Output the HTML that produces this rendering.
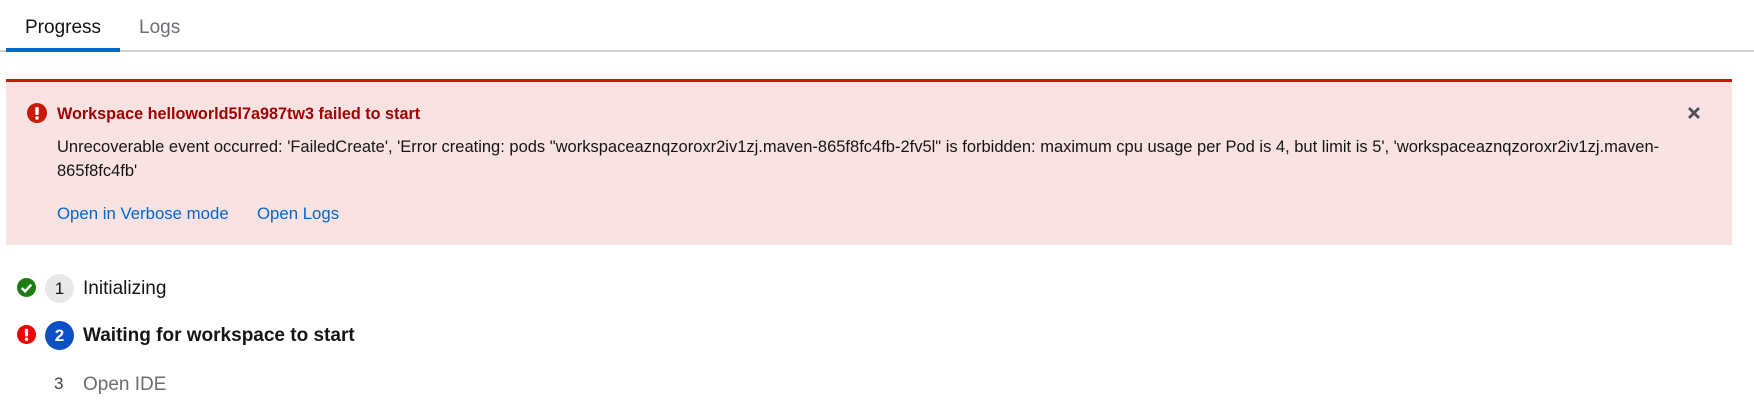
<!DOCTYPE html>
<html><head><style>
body{margin:0;width:1754px;height:402px;background:#fff;font-family:"Liberation Sans",sans-serif;color:#151515;position:relative;overflow:hidden}
.a{position:absolute;white-space:nowrap}
</style></head><body>
<div class="a" style="left:0;top:50px;width:1754px;height:2px;background:#d2d2d2"></div>
<div class="a" style="left:6px;top:48px;width:114px;height:4px;background:#0066cc"></div>
<div class="a" style="left:25px;top:17px;font-size:19px">Progress</div>
<div class="a" style="left:139px;top:17px;font-size:19px;color:#6a6e73">Logs</div>

<div class="a" style="left:6px;top:79px;width:1726px;height:166px;background:#f8e3e2;border-top:3px solid #c9190b;box-sizing:border-box"></div>
<svg class="a" style="left:27px;top:103px" width="20" height="20" viewBox="0 0 20 20"><circle cx="10" cy="10" r="10" fill="#c9190b"/><rect x="8.3" y="4" width="3.4" height="8" rx="1" fill="#fff"/><circle cx="10" cy="15" r="1.8" fill="#fff"/></svg>
<div class="a" style="left:57px;top:105px;font-size:16.2px;font-weight:bold;color:#a30000">Workspace helloworld5l7a987tw3 failed to start</div>
<svg class="a" style="left:1687px;top:106px" width="14" height="14" viewBox="0 0 14 14"><path d="M2 2L12 12M12 2L2 12" stroke="#4f5255" stroke-width="2.8"/></svg>
<div class="a" style="left:57px;top:135px;font-size:16.5px;line-height:24px;color:#151515">Unrecoverable event occurred: 'FailedCreate', 'Error creating: pods "workspaceaznqzoroxr2iv1zj.maven-865f8fc4fb-2fv5l" is forbidden: maximum cpu usage per Pod is 4, but limit is 5', 'workspaceaznqzoroxr2iv1zj.maven-<br>865f8fc4fb'</div>
<div class="a" style="left:57px;top:204px;font-size:16.8px;color:#0066cc">Open in Verbose mode</div>
<div class="a" style="left:257px;top:204px;font-size:16.8px;color:#0066cc">Open Logs</div>

<svg class="a" style="left:17px;top:278px" width="19" height="19" viewBox="0 0 20 20"><circle cx="10" cy="10" r="10" fill="#1e7c14"/><path d="M5 10.5L8.5 14L15 7" stroke="#fff" stroke-width="2.6" fill="none"/></svg>
<div class="a" style="left:45px;top:274px;width:29px;height:29px;border-radius:50%;background:#e8e8e8;text-align:center;line-height:29px;font-size:17px">1</div>
<div class="a" style="left:83px;top:278px;font-size:19px">Initializing</div>

<svg class="a" style="left:17px;top:325px" width="19" height="19" viewBox="0 0 20 20"><circle cx="10" cy="10" r="10" fill="#ee0000"/><rect x="8.3" y="4" width="3.4" height="8" rx="1" fill="#fff"/><circle cx="10" cy="15" r="1.8" fill="#fff"/></svg>
<div class="a" style="left:45px;top:321px;width:29px;height:29px;border-radius:50%;background:#0b50c4;color:#fff;text-align:center;line-height:29px;font-size:17px;font-weight:bold">2</div>
<div class="a" style="left:83px;top:325px;font-size:19px;font-weight:bold">Waiting for workspace to start</div>

<div class="a" style="left:54px;top:374px;font-size:17px;color:#444">3</div>
<div class="a" style="left:83px;top:374px;font-size:19px;color:#6a6e73">Open IDE</div>
</body></html>
